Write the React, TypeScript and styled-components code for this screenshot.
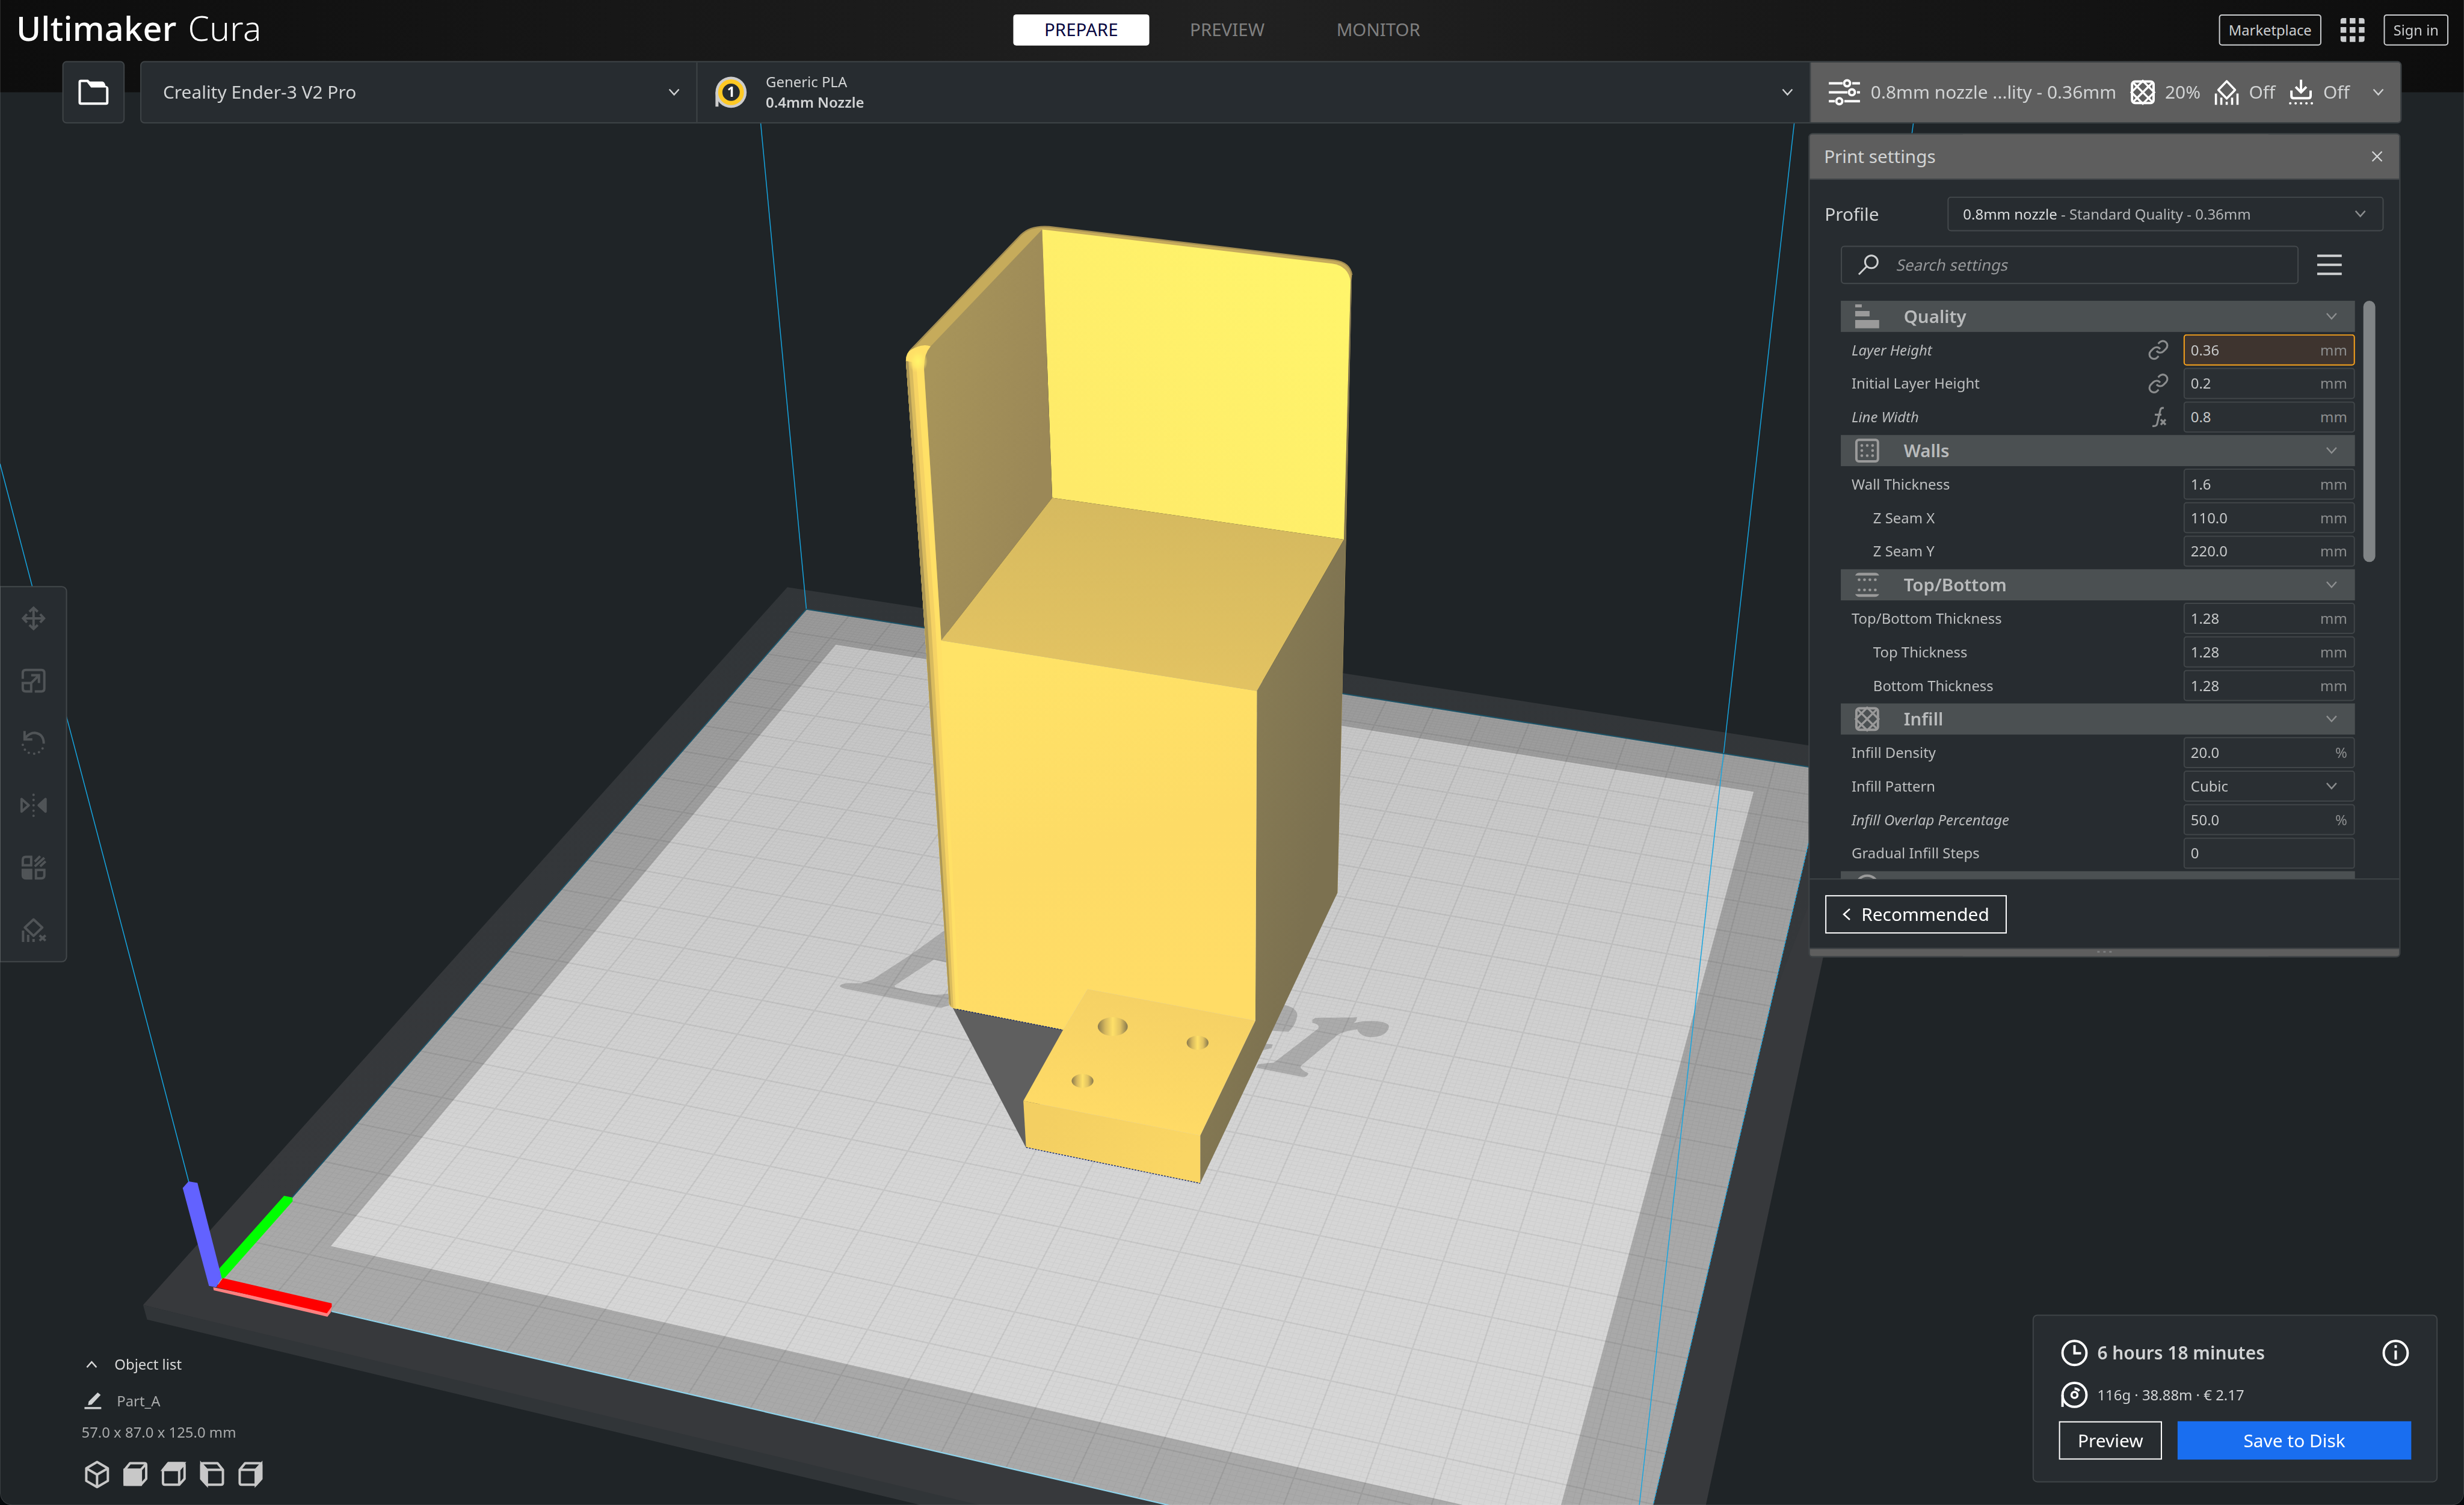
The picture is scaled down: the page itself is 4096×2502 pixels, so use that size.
import React from 'react';
import styled, { createGlobalStyle, css } from 'styled-components';

const color = {
  background: '#1f2427',
  panel: '#272c30',
  line: '#3f4447',
  raised: '#5e5e5e',
  category: '#4b5052',
  field: '#2a2f33',
  text: '#d2d4d5',
  label: '#bcbebf',
  dim: '#8c8e8f',
  white: '#ffffff',
  primary: '#196ef0',
};

const GlobalStyle = createGlobalStyle`
  html, body {
    margin: 0;
    background: #05090c;
  }
  body {
    width: 4096px;
    height: 2502px;
    overflow: hidden;
  }
  * {
    box-sizing: border-box;
  }
`;

/* ---------- layout ---------- */

const Window = styled.div`
  position: relative;
  width: 4112px;
  height: 2512px;
  overflow: hidden;
  transform: scale(0.99611);
  transform-origin: 0 0;
  border-radius: 0 0 20px 20px;
  background: ${color.background};
  color: ${color.text};
  font-family: 'Noto Sans', 'Open Sans', sans-serif;
  font-size: 24px;
  line-height: 1;
  white-space: nowrap;

  /* hairline the window manager draws over the window edge */
  &::after {
    content: '';
    position: absolute;
    inset: 0;
    border: 1px solid rgba(255, 255, 255, 0.13);
    border-top: 0;
    border-radius: 0 0 20px 20px;
  }
`;

const SceneSvg = styled.svg`
  position: absolute;
  top: 0;
  left: 0;
  display: block;
`;

const Foreground = styled.div`
  position: relative;
  display: flex;
  flex-direction: column;
  height: 100%;
  background: linear-gradient(90deg, #0d0d0d, #212121 50%, #0d0d0d) no-repeat;
  background-size: 100% 154px;
`;

const TopBar = styled.header`
  display: grid;
  grid-template-columns: 1fr auto 1fr;
  align-items: center;
  height: 102px;
  padding: 0 26px 2px 27px;
`;

const Logo = styled.div`
  color: ${color.white};
  font-size: 56px;
  font-weight: 500;
  line-height: 76px;
  letter-spacing: 0.3px;
  padding-bottom: 8px;

  span {
    margin-left: 4px;
    font-size: 57px;
    font-weight: 300;
  }
`;

const Stages = styled.nav`
  display: flex;
  gap: 16px;
`;

const Stage = styled.button<{ $active?: boolean }>`
  height: 52px;
  padding: 0 52px 3px;
  border: 0;
  border-radius: 5px;
  background: ${(props) => (props.$active ? color.white : 'transparent')};
  color: ${(props) => (props.$active ? '#08073f' : '#808080')};
  font: inherit;
  font-size: 29.6px;
  line-height: 49px;
`;

const Account = styled.div`
  display: flex;
  justify-content: flex-end;
  align-items: center;
  gap: 32px;
`;

const HeaderButton = styled.button<{ $width: number }>`
  width: ${(props) => props.$width}px;
  height: 52px;
  padding: 0;
  border: 2px solid #ccced0;
  border-radius: 5px;
  background: transparent;
  color: #ccced0;
  font: inherit;
  font-size: 23.8px;
  line-height: 48px;
`;

const ConfigRow = styled.div`
  display: flex;
  gap: 26px;
  height: 104px;
  padding-left: 104px;
`;

const OpenButton = styled.div`
  display: flex;
  align-items: center;
  justify-content: center;
  width: 104px;
  border: 2px solid ${color.line};
  border-radius: 7px;
  background: ${color.panel};
`;

const ConfigBar = styled.div`
  display: flex;
  width: 3774px;
  border: 2px solid ${color.line};
  border-radius: 7px;
  background: ${color.panel};
  overflow: hidden;
`;

const ConfigSection = styled.div<{ $width: number; $raised?: boolean }>`
  display: flex;
  align-items: center;
  width: ${(props) => props.$width}px;
  font-size: 30px;
  ${(props) =>
    props.$raised
      ? css`
          background: ${color.raised};
          padding: 0 28px 0 30px;
        `
      : css`
          border-right: 2px solid ${color.line};
          padding: 0 28px 0 36px;
        `}

  & > svg:last-child {
    margin-left: auto;
  }
`;

const Material = styled.div`
  display: flex;
  flex-direction: column;
  gap: 10px;
  margin-left: 32px;
  font-size: 24px;

  strong {
    font-weight: 600;
  }
`;

const ConfigText = styled.span<{ $left: number; $width: number }>`
  margin-left: ${(props) => props.$left}px;
  width: ${(props) => props.$width}px;
`;

const Body = styled.main`
  display: flex;
  flex: 1;
  justify-content: space-between;
`;

const LeftColumn = styled.div`
  display: flex;
  flex-direction: column;
  justify-content: space-between;
  padding-top: 772px;
`;

const RightColumn = styled.div`
  display: flex;
  flex-direction: column;
  align-items: flex-end;
  justify-content: space-between;
  padding: 16px 44px 38px 0;
`;

const Toolbar = styled.div`
  width: 112px;
  padding: 0;
  border: 2px solid #42474a;
  border-left-width: 1px;
  border-radius: 0 9px 9px 0;
  background: ${color.panel};
`;

const Tool = styled.div`
  display: flex;
  align-items: center;
  justify-content: center;
  height: 104px;
  color: #505457;
`;

/* ---------- object list ---------- */

const Objects = styled.div`
  display: flex;
  flex-direction: column;
  padding: 0 0 30px 136px;
`;

const ObjectRow = styled.div<{ $height: number; $gap?: number; $bright?: boolean }>`
  display: flex;
  align-items: center;
  gap: ${(props) => props.$gap ?? 0}px;
  height: ${(props) => props.$height}px;
  color: ${(props) => (props.$bright ? '#d8d8d8' : '#a9abac')};

  & > svg {
    margin-left: ${(props) => (props.$bright ? 8 : 5)}px;
  }
`;

const ViewButtons = styled.div`
  display: flex;
  gap: 20px;
  margin: 27px 0 0 4px;
  color: #c8c8c8;
`;

/* ---------- settings panel ---------- */

const SettingsPanel = styled.section`
  width: 988px;
  height: 1376px;
  margin-right: 62px;
  border: 2px solid ${color.line};
  border-radius: 7px;
  background: ${color.panel};
  overflow: hidden;
`;

const PanelTitle = styled.div`
  display: flex;
  align-items: center;
  justify-content: space-between;
  height: 76px;
  padding: 0 29px 0 24px;
  border-bottom: 2px solid ${color.line};
  background: ${color.raised};
  font-size: 29.8px;
`;

const ProfileRow = styled.div`
  display: flex;
  align-items: center;
  justify-content: space-between;
  margin: 28px 26px 24px 25px;
  font-size: 30px;
`;

const ProfileSelect = styled.div`
  display: flex;
  align-items: center;
  justify-content: space-between;
  width: 728px;
  height: 58px;
  padding: 0 28px 0 24px;
  border: 2px solid #44494c;
  border-radius: 6px;
  font-size: 24.1px;
  color: #dcdedf;

  em {
    font-style: normal;
    color: #b4b6b8;
  }
`;

const SearchRow = styled.div`
  display: flex;
  align-items: center;
  gap: 31px;
  margin: 0 0 28px 52px;
`;

const SearchField = styled.div`
  display: flex;
  align-items: center;
  gap: 31px;
  width: 764px;
  height: 64px;
  padding-left: 27px;
  border: 2px solid #44494c;
  border-radius: 6px;
  color: #97999b;
  font-size: 26px;

  span {
    transform: skewX(-12deg);
  }
`;

const SettingsScroll = styled.div`
  display: flex;
  gap: 14px;
  height: 964px;
  padding-left: 52px;
  overflow: hidden;
`;

const SettingsList = styled.div`
  display: flex;
  flex-direction: column;
  gap: 4px;
  width: 858px;
`;

const ScrollHandle = styled.div`
  width: 20px;
  height: 436px;
  border-radius: 10px;
  background: #808486;
`;

const Category = styled.div`
  display: flex;
  flex: none;
  align-items: center;
  height: 52px;
  padding: 0 30px 0 24px;
  background: ${color.category};
  color: #9a9a9a;

  strong {
    flex: 1;
    margin-left: 41px;
    color: #b9bbbc;
    font-size: 29.6px;
    font-weight: 600;
  }
`;

const SettingRow = styled.div<{ $indent?: boolean; $italic?: boolean }>`
  display: flex;
  flex: none;
  align-items: center;
  height: 52px;
  padding-left: ${(props) => (props.$indent ? 54 : 18)}px;
  color: ${color.label};

  & > span {
    flex: 1;
    font-style: ${(props) => (props.$italic ? 'italic' : 'normal')};
  }
`;

const StateIcon = styled.div`
  display: flex;
  justify-content: center;
  width: 32px;
  margin-right: 26px;
  color: #8b8d8e;
`;

const Field = styled.div<{ $changed?: boolean; $select?: boolean }>`
  display: flex;
  align-items: center;
  justify-content: space-between;
  width: 286px;
  height: 52px;
  padding: 0 ${(props) => (props.$select ? 28 : 11)}px 0 10px;
  border: 2px solid ${(props) => (props.$changed ? '#f8a21c' : '#414649')};
  border-radius: 5px;
  background: ${(props) => (props.$changed ? '#3e342f' : color.field)};
  color: #c6c8c9;

  em {
    font-style: normal;
    color: ${color.dim};
  }
`;

const PanelFooter = styled.div`
  height: 116px;
  padding: 26px;
  border-top: 2px solid ${color.line};
`;

const Button = styled.button<{ $primary?: boolean; $width: number }>`
  display: flex;
  align-items: center;
  justify-content: center;
  gap: 18px;
  width: ${(props) => props.$width}px;
  height: 64px;
  padding: 0;
  border: ${(props) => (props.$primary ? '0' : '2px solid #fff')};
  background: ${(props) => (props.$primary ? color.primary : 'transparent')};
  color: ${color.white};
  font: inherit;
  font-size: 30px;
  line-height: 1;
`;

const Grip = styled.div`
  display: flex;
  align-items: center;
  justify-content: center;
  gap: 6px;
  height: 14px;
  padding-bottom: 3px;
  border-top: 2px solid ${color.line};
  background: ${color.raised};

  i {
    width: 4px;
    height: 3px;
    background: #7b7d7e;
  }
`;

/* ---------- action panel ---------- */

const ActionPanel = styled.section`
  display: flex;
  flex-direction: column;
  width: 676px;
  height: 280px;
  padding: 40px 42px 0;
  border: 2px solid ${color.line};
  border-radius: 8px;
  background: ${color.panel};
`;

const JobRow = styled.div<{ $strong?: boolean }>`
  display: flex;
  align-items: center;
  gap: 16px;
  height: 44px;
  margin: 0 4px ${(props) => (props.$strong ? 26 : 22)}px;
  font-size: ${(props) => (props.$strong ? 30 : 24)}px;
  font-weight: ${(props) => (props.$strong ? 600 : 400)};

  span {
    flex: 1;
  }
`;

const ButtonRow = styled.div`
  display: flex;
  justify-content: space-between;
`;

/* ---------- icons ---------- */

const Glyph = styled.svg`
  display: block;
  flex: none;
  overflow: visible;
  fill: none;
  stroke: currentColor;
  stroke-width: 4;
`;

const MaterialSpool = styled(Glyph)`
  margin-left: -6px;
`;

type IconProps = { w: number; h?: number; c?: string; children: React.ReactNode };

const Icon = ({ w, h = w, c, children }: IconProps) => (
  <Glyph width={w} height={h} viewBox={`0 0 ${w} ${h}`} color={c}>
    {children}
  </Glyph>
);

const Chevron = ({ c = '#cfd1d2', up }: { c?: string; up?: boolean }) => (
  <Icon w={18} h={12} c={c}>
    <path d={up ? 'M1 11 9 2 17 11' : 'M1 1 9 10 17 1'} strokeWidth="2.4" />
  </Icon>
);

const infill = (
  <>
    <rect x="2" y="2" width="36" height="36" rx="5" />
    <path d="M4 4 36 36M36 4 4 36M20 1 39 20 20 39 1 20Z" strokeWidth="3.400" />
  </>
);

const SpoolIcon = () => (
  <Icon w={44} c="#fff">
    <circle cx="22" cy="22" r="20" />
    <path d="M2 22V42" />
    <circle cx="22" cy="22" r="5" strokeWidth="3.6" />
    <path d="M22 11.500q5 0 8 4" strokeWidth="4" />
  </Icon>
);

const LinkIcon = () => (
  <Glyph width="34" height="34" viewBox="0.700 0.700 22.600 22.600">
    <g strokeWidth="2.100">
      <path d="M10 13a5 5 0 0 0 7.540.540l3-3a5 5 0 0 0-7.070-7.070l-1.720 1.710" />
      <path d="M14 11a5 5 0 0 0-7.540-.540l-3 3a5 5 0 0 0 7.070 7.070l1.710-1.710" />
    </g>
  </Glyph>
);

const FxIcon = () => (
  <Icon w={28} h={34}>
    <path d="M23 2q-5-1-6 4l-5 22q-1 5-8 4M8 13H19" strokeWidth="3.2" />
    <path d="M18 21 26 30M26 21 18 30" strokeWidth="3.4" />
  </Icon>
);

const tools = [
  <>
    <path d="M20 4V36M4 20H36" />
    <path d="M13 9 20 2.500 27 9M13 31 20 37.500 27 31M9 13 2.500 20 9 27M31 13 37.500 20 31 27" />
  </>,
  <>
    <path d="M2 17V7q0-5 5-5H33q5 0 5 5V33q0 5-5 5H22" />
    <path d="M2 24H16V38H7q-5 0-5-5ZM16 24 29 11M16 11H29V24" />
  </>,
  <>
    <path d="M6 12Q13 3 22 3Q37 5 37 21" />
    <path d="M5 0V14H18" />
    <path d="M2 23h.1M5.500 31h.1M12 36.500h.1M21 38h.1M29 35.500h.1M35 29h.1" strokeLinecap="round" />
  </>,
  <>
    <path d="M0 9.500V30.500L12 20Z" strokeLinejoin="round" />
    <path d="M40 9.500V30.500L28.500 20Z" fill="currentColor" strokeLinejoin="round" />
    <path d="M20 2.500v.1M20 11v.1M20 20v.1M20 29v.1M20 37.500v.1" strokeLinecap="round" />
  </>,
  <>
    <path d="M7 2H16V16H2V7q0-5 5-5ZM24 24H38V33q0 5-5 5H24Z" />
    <path d="M2 24H16V38H7q-5 0-5-5Z" fill="currentColor" />
    <path d="M22 10 31 1M22 18 38 3.500M31 18 40 9.500" />
  </>,
  <>
    <path d="M20 2.500 34.500 16 20 30 5.500 16Z" strokeLinejoin="round" />
    <path d="M2.500 21V40M11 28V40M20 35V40" />
    <path d="M30 29 40 38M40 29 30 38" />
  </>,
];

const CubeFrame = () => (
  <path
    d="M2 13 11 2H35q3 0 3 3V28L29 38H5q-3 0-3-3ZM2 13H29V38M29 13 38 3"
    strokeLinejoin="round"
  />
);

const views = [
  <path d="M20 0 38 10.500V31.500L20 42 2 31.500V10.500ZM2 10.500 20 21 38 10.500M20 21V42" strokeLinejoin="round" />,
  <>
    <path d="M2 13H29V38H2Z" fill="currentColor" />
    <CubeFrame />
  </>,
  <>
    <path d="M2 13 11 2H37L29 13Z" fill="currentColor" />
    <CubeFrame />
  </>,
  <g transform="matrix(-1 0 0 1 40 0)">
    <path d="M29 13 38 3V28L29 38Z" fill="currentColor" />
    <CubeFrame />
  </g>,
  <>
    <path d="M29 13 38 3V28L29 38Z" fill="currentColor" />
    <CubeFrame />
  </>,
];

/* ---------- settings data ---------- */

type Setting = {
  label: string;
  value: string;
  unit?: string;
  indent?: boolean;
  italic?: boolean;
  changed?: boolean;
  select?: boolean;
  state?: 'link' | 'fx';
};

type SettingGroup = { name: string; icon: React.ReactNode; settings: Setting[] };

const groups: SettingGroup[] = [
  {
    name: 'Quality',
    icon: (
      <g fill="currentColor" stroke="none">
        <path d="M0 0H11V5H0ZM0 11H24V20H0ZM0 26H40V40H0Z" />
      </g>
    ),
    settings: [
      { label: 'Layer Height', value: '0.36', unit: 'mm', italic: true, changed: true, state: 'link' },
      { label: 'Initial Layer Height', value: '0.2', unit: 'mm', state: 'link' },
      { label: 'Line Width', value: '0.8', unit: 'mm', italic: true, state: 'fx' },
    ],
  },
  {
    name: 'Walls',
    icon: (
      <>
        <rect x="2" y="2" width="36" height="36" rx="4" />
        <path
          d="M11 11.500h.1M20 11.500h.1M29 11.500h.1M11 20h.1M29 20h.1M11 28.500h.1M20 28.500h.1M29 28.500h.1"
          strokeWidth="4.6"
          strokeLinecap="round"
        />
      </>
    ),
    settings: [
      { label: 'Wall Thickness', value: '1.6', unit: 'mm' },
      { label: 'Z Seam X', value: '110.0', unit: 'mm', indent: true },
      { label: 'Z Seam Y', value: '220.0', unit: 'mm', indent: true },
    ],
  },
  {
    name: 'Top/Bottom',
    icon: (
      <>
        <path d="M0 4.500Q2 0 7 0H33Q38 0 40 4.500ZM0 35.500Q2 40 7 40H33Q38 40 40 35.500Z" fill="currentColor" stroke="none" />
        <path
          d="M6.500 11.500h.1M15.500 11.500h.1M24.500 11.500h.1M33.500 11.500h.1M6.500 28.500h.1M15.500 28.500h.1M24.500 28.500h.1M33.500 28.500h.1"
          strokeWidth="4.6"
          strokeLinecap="round"
        />
      </>
    ),
    settings: [
      { label: 'Top/Bottom Thickness', value: '1.28', unit: 'mm' },
      { label: 'Top Thickness', value: '1.28', unit: 'mm', indent: true },
      { label: 'Bottom Thickness', value: '1.28', unit: 'mm', indent: true },
    ],
  },
  {
    name: 'Infill',
    icon: infill,
    settings: [
      { label: 'Infill Density', value: '20.0', unit: '%' },
      { label: 'Infill Pattern', value: 'Cubic', select: true },
      { label: 'Infill Overlap Percentage', value: '50.0', unit: '%', italic: true },
      { label: 'Gradual Infill Steps', value: '0' },
    ],
  },
];

/* ---------- 3D view ---------- */

type Point = [number, number];

// Build plate corners on screen: back left, back right, front right, front left.
const plate: Point[] = [
  [1345.700, 1016.700],
  [3047, 1284.500],
  [2717, 2690.300],
  [360.700, 2143.200],
];

const makeProjection = ([p0, p1, p2, p3]: Point[]) => {
  const dx1 = p1[0] - p2[0];
  const dx2 = p3[0] - p2[0];
  const dx3 = p0[0] - p1[0] + p2[0] - p3[0];
  const dy1 = p1[1] - p2[1];
  const dy2 = p3[1] - p2[1];
  const dy3 = p0[1] - p1[1] + p2[1] - p3[1];
  const den = dx1 * dy2 - dx2 * dy1;
  const g = (dx3 * dy2 - dx2 * dy3) / den;
  const h = (dx1 * dy3 - dx3 * dy1) / den;

  return (u: number, v: number) => {
    const w = g * u + h * v + 1;
    const x = ((p1[0] - p0[0] + g * p1[0]) * u + (p3[0] - p0[0] + h * p3[0]) * v + p0[0]) / w;
    const y = ((p1[1] - p0[1] + g * p1[1]) * u + (p3[1] - p0[1] + h * p3[1]) * v + p0[1]) / w;
    return `${x.toFixed(1)} ${y.toFixed(1)}`;
  };
};

const project = makeProjection(plate);
const PLATE_MM = 220;

const gridPath = (wanted: (mm: number) => boolean) => {
  let d = '';
  for (let mm = 1; mm < PLATE_MM; mm++) {
    if (!wanted(mm)) continue;
    const t = mm / PLATE_MM;
    d += `M${project(t, 0)}L${project(t, 1)}M${project(0, t)}L${project(1, t)}`;
  }
  return d;
};

const minorGrid = gridPath((mm) => mm % 10 !== 0);
const majorGrid = gridPath((mm) => mm % 10 === 0);

const Scene = () => (
  <SceneSvg width="4112" height="2512" viewBox="0 0 4112 2512">
    <defs>
      <linearGradient id="plate" gradientUnits="userSpaceOnUse" x1="0" y1="1010" x2="0" y2="2100">
        <stop offset="0" stopColor="#999999" />
        <stop offset="1" stopColor="#a9a9a9" />
      </linearGradient>
      <linearGradient id="printable" gradientUnits="userSpaceOnUse" x1="0" y1="1070" x2="0" y2="2000">
        <stop offset="0" stopColor="#c3c3c3" />
        <stop offset="1" stopColor="#d6d6d6" />
      </linearGradient>
      <linearGradient id="frame" gradientUnits="userSpaceOnUse" x1="0" y1="980" x2="0" y2="2000">
        <stop offset="0" stopColor="#313538" />
        <stop offset="1" stopColor="#37393c" />
      </linearGradient>
      <linearGradient id="back" gradientUnits="userSpaceOnUse" x1="1800" y1="830" x2="2220" y2="440">
        <stop offset="0" stopColor="#feea69" />
        <stop offset="1" stopColor="#fff56b" />
      </linearGradient>
      <linearGradient id="side" gradientUnits="userSpaceOnUse" x1="1560" y1="600" x2="1760" y2="640">
        <stop offset="0" stopColor="#a7945a" />
        <stop offset="1" stopColor="#9b8857" />
      </linearGradient>
      <linearGradient id="ledge" gradientUnits="userSpaceOnUse" x1="1900" y1="830" x2="1860" y2="1140">
        <stop offset="0" stopColor="#d5b95f" />
        <stop offset="1" stopColor="#e3c362" />
      </linearGradient>
      <linearGradient id="front" gradientUnits="userSpaceOnUse" x1="1700" y1="1080" x2="1860" y2="1700">
        <stop offset="0" stopColor="#ffe367" />
        <stop offset=".55" stopColor="#fddb66" />
        <stop offset="1" stopColor="#ffdc66" />
      </linearGradient>
      <linearGradient id="right" gradientUnits="userSpaceOnUse" x1="2090" y1="1200" x2="2240" y2="1230">
        <stop offset="0" stopColor="#877b54" />
        <stop offset="1" stopColor="#7c7150" />
      </linearGradient>
      <linearGradient id="foot" gradientUnits="userSpaceOnUse" x1="1900" y1="1660" x2="1860" y2="1880">
        <stop offset="0" stopColor="#f5d165" />
        <stop offset="1" stopColor="#ffdb66" />
      </linearGradient>
      <linearGradient id="footFront" gradientUnits="userSpaceOnUse" x1="1750" y1="1850" x2="1960" y2="1960">
        <stop offset="0" stopColor="#f3cf62" />
        <stop offset="1" stopColor="#fad664" />
      </linearGradient>
      <linearGradient id="hole">
        <stop offset="0" stopColor="#8a7a4e" />
        <stop offset=".25" stopColor="#d6b85e" />
        <stop offset=".5" stopColor="#ffe068" />
        <stop offset=".75" stopColor="#e0c161" />
        <stop offset="1" stopColor="#85774e" />
      </linearGradient>
      <radialGradient id="corner">
        <stop offset="0" stopColor="#fff56a" />
        <stop offset=".5" stopColor="#ffe968" />
        <stop offset="1" stopColor="#ffe066" stopOpacity="0" />
      </radialGradient>
    </defs>

    <path d="M238.800 2178 1314 980 3115 1259 2640 2760 2600 2760Z" fill="url(#frame)" />
    <path d="M238.800 2178 700 2288.400 1644 2514 1545 2514 700 2311.400 245.500 2202.300Z" fill="#313538" />
    <path d="M2600 2600 3115 1259 2846.800 2512Z" fill="#37393c" />

    <path d={`M${plate.map((p) => p.join(' ')).join('L')}Z`} fill="url(#plate)" />
    <path d="M1395 1076 2926.500 1321.500 2605 2512 2530 2532 552.200 2079.700Z" fill="url(#printable)" />
    <g fill="#ababab">
      <path d="M1580 1550 1519 1594 1457 1634 1437 1641 1412 1641Q1400 1643 1402 1647L1409 1650 1570 1682 1584 1678V1658Q1560 1663 1533 1657L1494 1648 1493 1645 1558.600 1601.500 1582 1607Z" />
      <path d="M2143 1677Q2165 1682 2165 1695 2162 1712 2150 1722L2120 1720ZM2110 1742 2124 1743 2122 1749 2107 1753Z" />
      <path d="M2190 1702 2195 1698.500 2257 1698 2265 1697.500 2263 1704 2259 1707.500Q2272 1704 2292 1704 2318 1705 2318 1714 2314 1731 2286 1731 2269 1729 2265 1718 2235 1722 2228 1731L2171 1779Q2168 1784 2183.500 1791 2182 1798 2174 1797.500L2096 1782 2100 1776 2126 1773.500 2199.500 1717Q2204 1710 2190 1707Z" />
    </g>
    <path d={minorGrid} stroke="#000" strokeOpacity=".035" strokeWidth="1.2" fill="none" />
    <path d={majorGrid} stroke="#000" strokeOpacity=".075" strokeWidth="2.4" fill="none" />

    <g fill="none" stroke="#16a5e0" strokeWidth="1.5">
      <path d="M1345.700 1016.700 1268 190M0 774 112 1200 222.700 1620 316.500 1978M2735.800 2512 2996 190M3047 1284 3193 206" />
      <path d="M3047 1284.500 2758.800 2512" strokeDasharray="4 2" />
      <path d="M553 2188.500 1950 2512" stroke="#8fd4ec" strokeWidth="2.2" />
      <path d="M3047 1284.500 1345.700 1016.700 480 2007" stroke="#1b5368" strokeWidth="2" />
    </g>

    {/* part */}
    <path d="M1590 1682 1774 1719 1712 1915Z" fill="#5f5f5f" />
    <path
      d="M1553 578 1739 383 1570.800 1069 1596.800 1684.300Q1585 1682 1584 1675L1572.600 1500 1542.700 1042 1511.800 602.500Q1511 590 1521.600 581L1704 392Q1720 376 1751 378.500L2226.700 434.300Q2253 438 2256 459L2246.300 901 2232 1490 2227 1500 2200 1300 2242.800 900 2200 600Z"
      fill="#c6ab5b"
    />
    <path d="M1519 585 1704 392Q1720 376 1751 378.500L2226.700 434.300Q2253 438 2256 459" fill="none" stroke="#a38d52" strokeWidth="2.5" />
    <path d="M1739.100 382.900 2223 440Q2251 444 2254 471L2242.800 900.400 1756 830.700Z" fill="url(#back)" />
    <path d="M1739.100 382.900 1756 830.700 1570.800 1069 1542 616Q1541 592 1553 578Z" fill="url(#side)" />
    <path d="M1756 830.700 2242.800 900.400 2097.600 1153.200 1570.800 1069Z" fill="url(#ledge)" />
    <path d="M2242.800 900.400 2097.600 1153.200 2095 1703.300 2003 1895V1974.700L2232 1490 2246 901Z" fill="url(#right)" />
    <path d="M2256 459 2246 901 2242.800 900.400 2254 471Z" fill="#7c7150" />
    <path d="M1570.800 1069 2097.600 1153.200 2095 1703.300 1815 1651 1774 1719 1596.800 1684.300Q1588 1680 1587 1660L1560 1069Z" fill="url(#front)" />
    <path
      d="M1511.800 602.500Q1512 588 1521.600 583 1540 573 1553 578 1541 592 1542 616L1570.800 1069 1601 1685 1590 1682Q1585 1680 1584 1675L1572.600 1500 1542.700 1042Z"
      fill="#ffe066"
    />
    <path d="M1511.800 602.500 1529 606 1561 1042 1587 1500 1595 1683 1590 1682 1584 1675 1572.600 1500 1542.700 1042Z" fill="#f5d264" />
    <path d="M1511.800 602.500 1522 604 1554 1042 1582 1500 1591 1682Q1585 1680 1584 1675L1572.600 1500 1542.700 1042Z" fill="#d9bb5e" />
    <path d="M1511.800 602.500 1516 603 1548 1042 1576 1500 1587 1679 1584 1675 1572.600 1500 1542.700 1042Z" fill="#ad9755" />
    <ellipse cx="1532" cy="603" rx="16" ry="20" fill="url(#corner)" />
    <path d="M1815 1651 2095 1703.300 2003 1895 1707.800 1837.300 1774 1719Z" fill="url(#foot)" />
    <path d="M1707.800 1837.300 2003 1895V1974.700L1712.300 1914.700Z" fill="url(#footFront)" />
    <ellipse cx="1857" cy="1713.300" rx="25" ry="15.700" fill="url(#hole)" />
    <ellipse cx="1998.600" cy="1740.300" rx="18.200" ry="11.600" fill="url(#hole)" />
    <ellipse cx="1806.600" cy="1804" rx="18.200" ry="11.500" fill="url(#hole)" />
    <path d="M1596.800 1684.300 1774 1719M1712.300 1915 2003 1975" stroke="#10256e" strokeWidth="1.4" strokeDasharray="3 2" />

    {/* origin axes */}
    <path d="M474 1995.800 488 1998.400 488.400 2004.900 375 2132.600 366 2135V2117Z" fill="#00ff00" />
    <path d="M314.700 1971.700 329.500 1974.300 370 2132.600 360.700 2148.300 348.700 2146.100 304.900 1982.700Z" fill="#6262ff" />
    <path d="M355.800 2148.300 545.500 2188 553.600 2180 552.200 2189.900 546.400 2197.600 356.700 2153.400Z" fill="#ff8080" />
    <path d="M371.900 2133 553.600 2175.300V2180.800L545.500 2191.700 361.200 2148.300Z" fill="#ff0000" />
  </SceneSvg>
);

/* ---------- page ---------- */

const Header = () => (
  <TopBar>
    <Logo>
      Ultimaker <span>Cura</span>
    </Logo>
    <Stages>
      <Stage $active>PREPARE</Stage>
      <Stage>PREVIEW</Stage>
      <Stage>MONITOR</Stage>
    </Stages>
    <Account>
      <HeaderButton $width={171}>Marketplace</HeaderButton>
      <Icon w={40} c="#ccced0">
        <g fill="currentColor" stroke="none">
          <path d="M4 0H9.500V9.500H0V4Q0 0 4 0ZM15.300 0h9.500v9.500h-9.500ZM30.600 0H36Q40 0 40 4V9.500H30.600Z" />
          <path d="M0 15.300h9.500v9.500H0ZM15.300 15.300h9.500v9.500h-9.500ZM30.600 15.300H40v9.500H30.600Z" />
          <path d="M0 30.600H9.500V40H4Q0 40 0 36ZM15.300 30.600h9.500V40h-9.500ZM30.600 30.600H40V36Q40 40 36 40H30.600Z" />
        </g>
      </Icon>
      <HeaderButton $width={108}>Sign in</HeaderButton>
    </Account>
  </TopBar>
);

const Configuration = () => (
  <ConfigRow>
    <OpenButton>
      <Icon w={50} h={42} c="#fff">
        <path
          d="M4 0H16L19 3H40Q44 4 45 10 50 11 50 15V38Q50 42 46 42H4Q0 42 0 38V4Q0 0 4 0ZM4 4V38H46V13H21L14 4Z"
          fill="currentColor"
          fillRule="evenodd"
          stroke="none"
        />
      </Icon>
    </OpenButton>
    <ConfigBar>
      <ConfigSection $width={928}>
        Creality Ender-3 V2 Pro
        <Chevron />
      </ConfigSection>
      <ConfigSection $width={1858}>
        <MaterialSpool width="52" height="52" viewBox="0 0 52 52">
          <circle cx="26" cy="26" r="26" fill="#ccc" stroke="none" />
          <path d="M2.500 26V50" stroke="#ccc" strokeWidth="5" />
          <circle cx="26" cy="26" r="18" fill={color.panel} stroke="#ffc924" strokeWidth="7" />
          <text x="26" y="34" textAnchor="middle" fill="#fff" stroke="none" fontSize="23" fontWeight="700">
            1
          </text>
        </MaterialSpool>
        <Material>
          <span>Generic PLA</span>
          <strong>0.4mm Nozzle</strong>
        </Material>
        <Chevron />
      </ConfigSection>
      <ConfigSection $width={984} $raised>
        <Icon w={52} h={44} c="#fff">
          <path d="M0 7H23M39 7H52M0 22H31M47 22H52M0 37H10M26 37H52" />
          <circle cx="30.500" cy="7" r="5" />
          <circle cx="38.500" cy="22" r="5" />
          <circle cx="17.500" cy="37" r="5" />
        </Icon>
        <ConfigText $left={18} $width={434}>
          0.8mm nozzle ...lity - 0.36mm
        </ConfigText>
        <Icon w={40} c="#fff">
          {infill}
        </Icon>
        <ConfigText $left={17} $width={83}>
          20%
        </ConfigText>
        <Icon w={40} h={42} c="#fff">
          <path d="M20 2.500 34 17 20 31.500 6 17Z" strokeWidth="3.600" strokeLinejoin="round" />
          <path d="M2 23V42M11 30V42M20 37V42M29 30V42M38 23V42" strokeWidth="3.600" />
        </Icon>
        <ConfigText $left={17} $width={67}>
          Off
        </ConfigText>
        <Icon w={40} h={42} c="#fff">
          <path d="M20 0V20M11 12 20 21 29 12" />
          <path d="M4 18V27Q4 31 8 31H32Q36 31 36 27V18" />
          <path d="M2 39.500h.1M11 39.500h.1M20 39.500h.1M29 39.500h.1M38 39.500h.1" strokeLinecap="round" />
        </Icon>
        <ConfigText $left={17} $width={50}>
          Off
        </ConfigText>
        <Chevron />
      </ConfigSection>
    </ConfigBar>
  </ConfigRow>
);

const PrintSettings = () => (
  <SettingsPanel>
    <PanelTitle>
      Print settings
      <Icon w={16} c="#d8dadb">
        <path d="M0 0 16 16M16 0 0 16" strokeWidth="2.2" />
      </Icon>
    </PanelTitle>
    <ProfileRow>
      Profile
      <ProfileSelect>
        <span>
          0.8mm nozzle <em>- Standard Quality - 0.36mm</em>
        </span>
        <Chevron c="#8c8e8f" />
      </ProfileSelect>
    </ProfileRow>
    <SearchRow>
      <SearchField>
        <Icon w={34} c="#cfd1d2">
          <circle cx="22" cy="12" r="10.500" strokeWidth="3" />
          <path d="M14.500 19.500 1 33" strokeWidth="3" />
        </Icon>
        <span>Search settings</span>
      </SearchField>
      <Icon w={41} h={36} c="#cfd1d2">
        <path d="M0 3H41M0 18H41M0 33H41" />
      </Icon>
    </SearchRow>
    <SettingsScroll>
      <SettingsList>
        {groups.map((group) => (
          <React.Fragment key={group.name}>
            <Category>
              <Icon w={40}>{group.icon}</Icon>
              <strong>{group.name}</strong>
              <Chevron c="#8e9091" />
            </Category>
            {group.settings.map((setting) => (
              <SettingRow key={setting.label} $indent={setting.indent} $italic={setting.italic}>
                <span>{setting.label}</span>
                {setting.state && <StateIcon>{setting.state === 'link' ? <LinkIcon /> : <FxIcon />}</StateIcon>}
                <Field $changed={setting.changed} $select={setting.select}>
                  {setting.value}
                  {setting.select ? <Chevron c="#8c8e8f" /> : <em>{setting.unit}</em>}
                </Field>
              </SettingRow>
            ))}
          </React.Fragment>
        ))}
        <Category>
          <Icon w={40}>
            <circle cx="20" cy="20" r="18.500" />
          </Icon>
        </Category>
      </SettingsList>
      <ScrollHandle />
    </SettingsScroll>
    <PanelFooter>
      <Button $width={303}>
        <Icon w={13} h={20}>
          <path d="M12 1 2 10 12 19" strokeWidth="2.6" />
        </Icon>
        Recommended
      </Button>
    </PanelFooter>
    <Grip>
      <i />
      <i />
      <i />
    </Grip>
  </SettingsPanel>
);

const App = () => (
  <>
    <GlobalStyle />
    <Window>
      <Scene />
      <Foreground>
        <Header />
        <Configuration />
        <Body>
          <LeftColumn>
            <Toolbar>
              {tools.map((tool, index) => (
                <Tool key={index}>
                  <Icon w={40}>{tool}</Icon>
                </Tool>
              ))}
            </Toolbar>
            <Objects>
              <ObjectRow $height={60} $gap={29} $bright>
                <Chevron up c="#d8d8d8" />
                Object list
              </ObjectRow>
              <ObjectRow $height={62} $gap={26}>
                <Icon w={28} c="#d0d2d3">
                  <path d="M0 26H28" strokeWidth="3.4" />
                  <path d="M22 0 27 4 12 20 6 21 7 15Z" fill="currentColor" stroke="none" />
                </Icon>
                Part_A
              </ObjectRow>
              <ObjectRow $height={42}>57.0 x 87.0 x 125.0 mm</ObjectRow>
              <ViewButtons>
                {views.map((view, index) => (
                  <Icon key={index} w={44}>
                    <g transform="translate(2 2)">{view}</g>
                  </Icon>
                ))}
              </ViewButtons>
            </Objects>
          </LeftColumn>
          <RightColumn>
            <PrintSettings />
            <ActionPanel>
              <JobRow $strong>
                <Icon w={44} c="#fff">
                  <circle cx="22" cy="22" r="20" />
                  <path d="M22 9V22.500H33" />
                </Icon>
                <span>6 hours 18 minutes</span>
                <Icon w={44} c="#fff">
                  <circle cx="22" cy="22" r="20" />
                  <path d="M22 9V13.500M22 18V33" />
                </Icon>
              </JobRow>
              <JobRow>
                <SpoolIcon />
                <span>116g · 38.88m · € 2.17</span>
              </JobRow>
              <ButtonRow>
                <Button $width={172}>Preview</Button>
                <Button $width={390} $primary>
                  Save to Disk
                </Button>
              </ButtonRow>
            </ActionPanel>
          </RightColumn>
        </Body>
      </Foreground>
    </Window>
  </>
);

export default App;
